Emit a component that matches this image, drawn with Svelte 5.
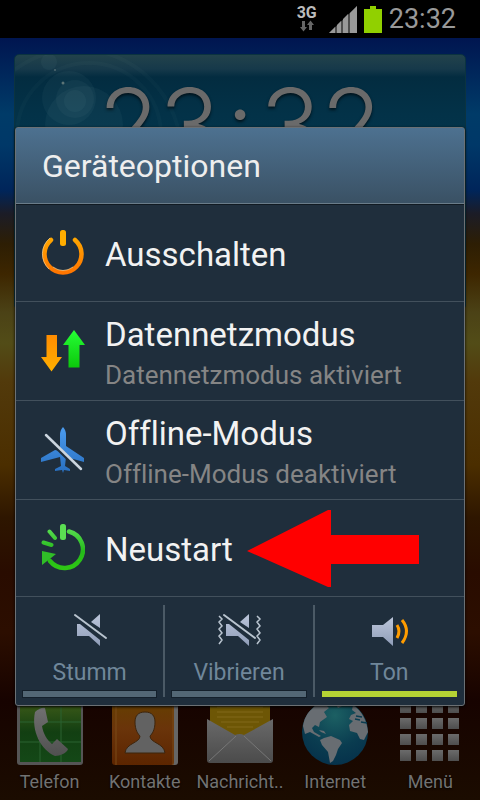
<script lang="ts">
  type Option = {
    id: string;
    title: string;
    status?: string;
  };

  const options: Option[] = [
    { id: "power", title: "Ausschalten" },
    {
      id: "data",
      title: "Datennetzmodus",
      status: "Datennetzmodus aktiviert",
    },
    {
      id: "flight",
      title: "Offline-Modus",
      status: "Offline-Modus deaktiviert",
    },
    { id: "restart", title: "Neustart" },
  ];

  const soundModes = [
    { id: "mute", label: "Stumm" },
    { id: "vibrate", label: "Vibrieren" },
    { id: "sound", label: "Ton" },
  ];

  const dock = [
    { id: "phone", label: "Telefon" },
    { id: "contacts", label: "Kontakte" },
    { id: "messages", label: "Nachricht.." },
    { id: "browser", label: "Internet" },
    { id: "menu", label: "Menü" },
  ];

  const gridSteps = [0, 1, 2, 3];

  let soundMode = $state("sound");
  let time = "23:32";
</script>

<div class="phone">
  <header class="status-bar">
    <div class="network">
      <span class="network-type">3G</span>
      <svg width="14" height="12" viewBox="0 0 14 12" aria-hidden="true">
        <path
          d="M2 1h3v6h2l-3.500 4.500L0 7h2zM9 10h3V5h2l-3.500-4.500L7 5h2z"
          fill="#666"
        />
      </svg>
    </div>
    <svg width="28" height="27" viewBox="0 0 28 27" aria-hidden="true">
      <path
        d="M0 27L6 21V27zM8 27V19L12 15V27zM14 27V13L19 8V27zM21 27V7L28 0V27z"
        fill="#999"
      />
      <path d="M0 27L28 0V27z" fill="#999" opacity="0.5" />
    </svg>
    <svg width="18" height="27" viewBox="0 0 18 27" aria-hidden="true">
      <path d="M0 3h6V0h6v3h6v24H0z" fill="#91d000" />
    </svg>
    <span class="status-time">{time}</span>
  </header>

  <main class="home">
    <section class="clock-widget">
      <svg class="flare" viewBox="0 0 180 100" aria-hidden="true">
        <g fill="#9fc0c0" fill-opacity="0.050">
          <circle cx="54" cy="43" r="27" />
          <circle cx="60" cy="44" r="19" />
          <circle cx="60" cy="46" r="11" />
          <circle cx="69" cy="70" r="39" />
          <circle cx="34" cy="7" r="8" />
        </g>
        <g fill="none" stroke="#9fc0c0" stroke-opacity="0.030" stroke-width="4">
          <circle cx="74" cy="80" r="72" />
          <circle cx="62" cy="98" r="104" />
        </g>
        <circle cx="48" cy="28" r="1.500" fill="#5c7476" />
        <circle cx="40" cy="15" r="1" fill="#506a70" />
      </svg>
      <div class="big-time">
        <span>23</span><span class="colon">:</span><span>32</span>
      </div>
    </section>

    <nav class="dock">
      {#each dock as app (app.id)}
        <button type="button" class="app">
          <svg width="66" height="66" viewBox="0 0 66 66" aria-hidden="true">
            {#if app.id === "phone"}
              <defs>
                <linearGradient id="phoneFill" x2="0" y2="1">
                  <stop offset="0" stop-color="#3d5a18" />
                  <stop offset="0.500" stop-color="#123f12" />
                  <stop offset="1" stop-color="#144817" />
                </linearGradient>
                <linearGradient id="handset" x2="0" y2="1">
                  <stop offset="0" stop-color="#707070" />
                  <stop offset="1" stop-color="#505050" />
                </linearGradient>
              </defs>
              <rect width="66" height="66" rx="3" fill="#555" />
              <rect x="3" y="3" width="61" height="60" fill="url(#phoneFill)" />
              <path
                d="M3 23H64M3 43H64M23 3V63M44 3V63"
                stroke="#2b6330"
                stroke-width="1"
              />
              <path
                d="M18 13C21 10 26 8 28 9L31 23L25 27C26 34 30 41 35 45L40 40L51 50C50 54 43 57 38 57C24 51 14 32 18 13z"
                fill="url(#handset)"
              />
            {:else if app.id === "contacts"}
              <defs>
                <linearGradient id="bookFill" x2="0" y2="1">
                  <stop offset="0" stop-color="#654000" />
                  <stop offset="0.450" stop-color="#6a340a" />
                  <stop offset="1" stop-color="#5c2500" />
                </linearGradient>
              </defs>
              <rect x="4" width="62" height="66" rx="3" fill="#666" />
              <rect width="62" height="66" rx="3" fill="url(#bookFill)" />
              <path d="M4 0V66M61 0V66" stroke="#7a4a18" />
              <path
                d="M33 13C40 13 43 17 43 23C43 31 40 35 38 37C38 44 52 44 53 54H13C14 44 28 44 28 37C26 35 23 31 23 23C23 17 26 13 33 13z"
                fill="#626262"
                stroke="#3d250d"
              />
            {:else if app.id === "messages"}
              <defs>
                <linearGradient id="envelope" x2="0" y2="1">
                  <stop offset="0" stop-color="#696969" />
                  <stop offset="1" stop-color="#4b4b4b" />
                </linearGradient>
              </defs>
              <rect x="3" width="60" height="50" fill="#6d5605" />
              <path
                d="M10 8H56M10 13H56M10 18H56M14 23H52M20 28H46"
                stroke="#82691a"
              />
              <path
                d="M0 20L28 36Q33 34 37 36L66 20V61Q66 64 63 64H3Q0 64 0 61z"
                fill="url(#envelope)"
              />
              <path
                d="M2 62L29 37M64 62L37 37"
                stroke="#777"
                stroke-width="1"
              />
            {:else if app.id === "browser"}
              <defs>
                <radialGradient id="ocean" cx="0.500" cy="0.250" r="0.800">
                  <stop offset="0" stop-color="#1c6063" />
                  <stop offset="0.600" stop-color="#0a3c50" />
                  <stop offset="1" stop-color="#05304a" />
                </radialGradient>
              </defs>
              <circle cx="33" cy="33" r="33" fill="url(#ocean)" />
              <g fill="#686d72">
                <path
                  d="M10 10C15 4 22 1 28 1L24 6L27 9L22 13L25 18L18 23L17 28L13 26L10 29L12 33L19 37L17 38L8 33L3 35L1 27C2 20 5 14 10 10z"
                />
                <path
                  d="M22 39L29 37L38 41L40 44L36 50L34 56L31 62L28 64L26 53L20 46L18 41z"
                />
                <path
                  d="M17 31L22 32L24 35L19 33zM33 4L42 2L40 7L36 9z"
                />
                <path
                  d="M51 6C60 12 65 22 66 33L62 41L58 40L55 34L48 32L47 26L51 22L47 20L49 16L54 14L50 11z"
                />
              </g>
              <path
                d="M54 17L60 18M53 20L58 21M59 23L65 24"
                stroke="#0a3c50"
                stroke-width="1.500"
              />
            {:else}
              <defs>
                <linearGradient id="tile" x2="0" y2="1">
                  <stop offset="0" stop-color="#6b6b6b" />
                  <stop offset="1" stop-color="#4e4e4e" />
                </linearGradient>
              </defs>
              {#each gridSteps as row}
                {#each gridSteps as col}
                  <rect
                    x={3 + col * 16}
                    y={3 + row * 16}
                    width="11"
                    height="11"
                    fill="url(#tile)"
                  />
                {/each}
              {/each}
            {/if}
          </svg>
          <span>{app.label}</span>
        </button>
      {/each}
    </nav>
  </main>

  <div class="backdrop">
    <div class="dialog" role="dialog" aria-labelledby="dialog-title">
      <h1 id="dialog-title">Geräteoptionen</h1>

      <ul class="options">
        {#each options as option (option.id)}
          <li>
            <button type="button" class="option" class:detailed={option.status}>
              <svg width="44" height="48" viewBox="0 0 44 48" aria-hidden="true">
                {#if option.id === "power"}
                  <defs>
                    <linearGradient
                      id="powerFill"
                      gradientUnits="userSpaceOnUse"
                      x1="0"
                      y1="0"
                      x2="0"
                      y2="46"
                    >
                      <stop offset="0" stop-color="#ffb400" />
                      <stop offset="1" stop-color="#ff7200" />
                    </linearGradient>
                  </defs>
                  <path
                    d="M10 11A18.500 18.500 0 1 0 34 11"
                    fill="none"
                    stroke="url(#powerFill)"
                    stroke-width="4.500"
                    stroke-linecap="round"
                  />
                  <path
                    d="M8 40A20.500 20.500 0 0 1 9 9M12 38Q22 45 32 38"
                    fill="none"
                    stroke="#ffe0a8"
                    stroke-width="0.600"
                  />
                  <rect x="19" y="1" width="6" height="16" rx="2.500" fill="#ffad00" />
                {:else if option.id === "data"}
                  <defs>
                    <linearGradient id="downFill" x2="0" y2="1">
                      <stop offset="0" stop-color="#ff8c00" />
                      <stop offset="1" stop-color="#ffb000" />
                    </linearGradient>
                    <linearGradient id="upFill" x2="0" y2="1">
                      <stop offset="0" stop-color="#25ff35" />
                      <stop offset="1" stop-color="#0cc80c" />
                    </linearGradient>
                  </defs>
                  <path d="M5.500 8H16V30H21L10.500 44.500L0 30H5.500z" fill="url(#downFill)" />
                  <path d="M33 3L44 18H38.500V40.500H27.500V18H22z" fill="url(#upFill)" />
                {:else if option.id === "flight"}
                  <defs>
                    <linearGradient id="planeFill" x2="0" y2="1">
                      <stop offset="0" stop-color="#4b9cf0" />
                      <stop offset="1" stop-color="#286fc0" />
                    </linearGradient>
                  </defs>
                  <path
                    d="M22 1Q25 4 25 9V20L43 32V36L25 31L24 40L29 43V45L23 44L22 47L21 44L14 45V43L20 40L19 31L0 36V32L14 24L19 25V9Q19 4 22 1z"
                    fill="url(#planeFill)"
                  />
                  <path d="M4 10L39 44" stroke="#1f2e3c" stroke-width="4" />
                  <path
                    d="M5 9L40 43"
                    stroke="#cbd5df"
                    stroke-width="2.500"
                    stroke-linecap="round"
                  />
                {:else}
                  <defs>
                    <linearGradient
                      id="restartFill"
                      gradientUnits="userSpaceOnUse"
                      x1="0"
                      y1="0"
                      x2="0"
                      y2="46"
                    >
                      <stop offset="0" stop-color="#62e45b" />
                      <stop offset="0.600" stop-color="#24b91a" />
                      <stop offset="1" stop-color="#2fc814" />
                    </linearGradient>
                  </defs>
                  <g
                    fill="none"
                    stroke="url(#restartFill)"
                    stroke-width="4.500"
                    stroke-linecap="round"
                  >
                    <path d="M28 7.500A18.500 18.500 0 1 1 9 37" />
                    <path d="M8.500 7.500L14 14M2.500 18.500L10.500 21" stroke-width="4" />
                  </g>
                  <rect x="19" y="0" width="6" height="16" rx="2.500" fill="#5bde52" />
                  <path d="M1 27L15 30L10 34L1 41z" fill="#30bd28" />
                {/if}
              </svg>
              <span class="option-text">
                <span class="option-title">{option.title}</span>
                {#if option.status}
                  <span class="option-status">{option.status}</span>
                {/if}
              </span>
            </button>
            {#if option.id === "restart"}
              <svg class="pointer" width="172" height="78" viewBox="0 0 172 78" aria-hidden="true">
                <path d="M0 41L81 0H84V25H172V54H84V77H81z" fill="#f00" />
              </svg>
            {/if}
          </li>
        {/each}
      </ul>

      <div class="sound-modes">
        {#each soundModes as mode (mode.id)}
          <button
            type="button"
            class="sound-mode"
            class:active={soundMode === mode.id}
            aria-pressed={soundMode === mode.id}
            onclick={() => (soundMode = mode.id)}
          >
            <svg width="48" height="40" viewBox="0 0 48 40" aria-hidden="true">
              <defs>
                <linearGradient id="speaker-{mode.id}" x2="0" y2="1">
                  <stop offset="0" stop-color="#bcc6da" />
                  <stop offset="1" stop-color="#8f9db8" />
                </linearGradient>
              </defs>
              {#if mode.id === "sound"}
                <path
                  d="M7 15H18L28 7V36L18 27H7z"
                  fill="url(#speaker-{mode.id})"
                />
                <path
                  d="M32 15Q36 21 32 28M37 10Q46 21 37 33"
                  fill="none"
                  stroke="#ff9c00"
                  stroke-width="3"
                />
              {:else}
                <path
                  d="M11 14H14L34 30V36L23 26H11zM34 4V18L25 12z"
                  fill="url(#speaker-{mode.id})"
                />
                <path
                  d="M9 5L40 28"
                  stroke="#b9c4cf"
                  stroke-width="2"
                  stroke-linecap="round"
                />
                {#if mode.id === "vibrate"}
                  <path
                    d="M4 6L7 9L4 12L7 16L4 19L7 23L4 26L7 30L4 34M42 6L45 9L42 12L45 16L42 19L45 23L42 26L45 30L42 34"
                    fill="none"
                    stroke="#b9c4cf"
                    stroke-width="1.500"
                  />
                {/if}
              {/if}
            </svg>
            <span class="sound-label">{mode.label}</span>
            <span class="indicator"></span>
          </button>
        {/each}
      </div>
    </div>
  </div>
</div>

<style>
  :global(body) {
    margin: 0;
    background: #000;
  }

  .phone {
    position: relative;
    display: flex;
    flex-direction: column;
    min-height: 100vh;
    font-family: Roboto, "Noto Sans", sans-serif;
    font-variant-ligatures: none;
  }

  button {
    margin: 0;
    padding: 0;
    border: 0;
    background: none;
    color: inherit;
    font: inherit;
    font-variant-ligatures: none;
    cursor: pointer;
  }

  svg {
    display: block;
    flex: none;
  }

  .status-bar {
    display: flex;
    align-items: center;
    justify-content: flex-end;
    gap: 7px;
    height: 38px;
    padding-right: 24px;
    box-sizing: border-box;
    background: #000;
    color: #999;
  }

  .network {
    display: flex;
    flex-direction: column;
    align-items: center;
    margin-right: 5px;
  }

  .network-type {
    color: #bbb;
    font-size: 16px;
    font-weight: 700;
    line-height: 14px;
  }

  .status-time {
    font-size: 27px;
    line-height: 38px;
  }

  .home {
    flex: 1;
    display: flex;
    flex-direction: column;
    justify-content: space-between;
    padding: 16px 0 7px;
    background: linear-gradient(
      #001550 0%,
      #003b68 10%,
      #003868 14%,
      #00255a 20%,
      #1b1c27 23%,
      #2d1e04 27%,
      #3d2600 31%,
      #4b4216 36%,
      #524c17 40%,
      #523a0b 45%,
      #4b2e00 56%,
      #2e1600 63%,
      #290c00 70%,
      #2c0e00 78%,
      #170300 87%,
      #1b0c00 100%
    );
  }

  .clock-widget {
    position: relative;
    margin: 0 14px;
    min-height: 256px;
    overflow: hidden;
    border: 1px solid #0b3340;
    border-radius: 5px;
    box-sizing: border-box;
    background: linear-gradient(
      #22424b 0,
      #16394a 14px,
      #032c40 22px,
      #033248 60px,
      #064258 100%
    );
  }

  .flare {
    position: absolute;
    top: 0;
    left: 0;
    width: 180px;
  }

  .big-time {
    display: flex;
    justify-content: center;
    margin-top: 30px;
    color: #6a6a6a;
    font-family: Inter, sans-serif;
    font-size: 100px;
    font-weight: 300;
    line-height: 80px;
    text-shadow: 0 2px 3px #00131c;
  }

  .colon {
    padding: 0 6px;
  }

  .dock {
    display: grid;
    grid-template-columns: repeat(5, minmax(0, 1fr));
    padding: 0 2px;
  }

  .app {
    display: flex;
    flex-direction: column;
    align-items: center;
    gap: 6px;
    color: #727272;
    font-size: 18px;
    line-height: 22px;
    white-space: nowrap;
    text-shadow: 0 1px 2px #000;
  }

  .backdrop {
    position: absolute;
    inset: 38px 0 0;
    display: flex;
    align-items: center;
    padding: 0 15px 5px;
  }

  .dialog {
    flex: 1;
    border: 1px solid #6b7074;
    border-radius: 3px;
    background: #1f2e3c;
    box-shadow: 0 1px 3px #000;
  }

  h1 {
    margin: 0;
    padding: 2px 26px 0;
    border-bottom: 1px solid #6a7c89;
    background: linear-gradient(#4d7190, #3a5164);
    color: #eee;
    font-size: 32px;
    font-weight: 400;
    line-height: 73px;
  }

  .options {
    margin: 0;
    padding: 0;
    list-style: none;
  }

  li {
    position: relative;
    border-bottom: 1px solid #42505c;
  }

  li:first-child {
    border-top: 1px solid #111a22;
  }

  .option {
    display: flex;
    align-items: center;
    gap: 20px;
    width: 100%;
    min-height: 96px;
    padding: 0 25px;
    text-align: left;
  }

  .option.detailed {
    min-height: 98px;
  }

  .option-text {
    display: flex;
    flex-direction: column;
    padding-top: 3px;
  }

  .option-title {
    color: #f2f2f2;
    font-size: 33px;
    line-height: 44px;
  }

  .option-status {
    color: #858585;
    font-size: 26px;
    line-height: 36px;
  }

  .pointer {
    position: absolute;
    top: 10px;
    left: 231px;
    pointer-events: none;
  }

  .sound-modes {
    display: grid;
    grid-template-columns: repeat(3, minmax(0, 1fr));
    padding: 8px 0;
  }

  .sound-mode {
    display: flex;
    flex-direction: column;
    align-items: center;
    padding: 5px 7px 0;
    border-right: 2px solid #4b5a66;
    color: #70879a;
  }

  .sound-mode:last-child {
    border-right: 0;
  }

  .sound-label {
    padding-top: 5px;
    font-size: 23px;
    line-height: 36px;
  }

  .indicator {
    align-self: stretch;
    height: 6px;
    background: #536775;
    box-shadow: 0 0 0 1px #14202b;
  }

  .active .indicator {
    background: #b5d334;
    box-shadow: none;
  }
</style>
